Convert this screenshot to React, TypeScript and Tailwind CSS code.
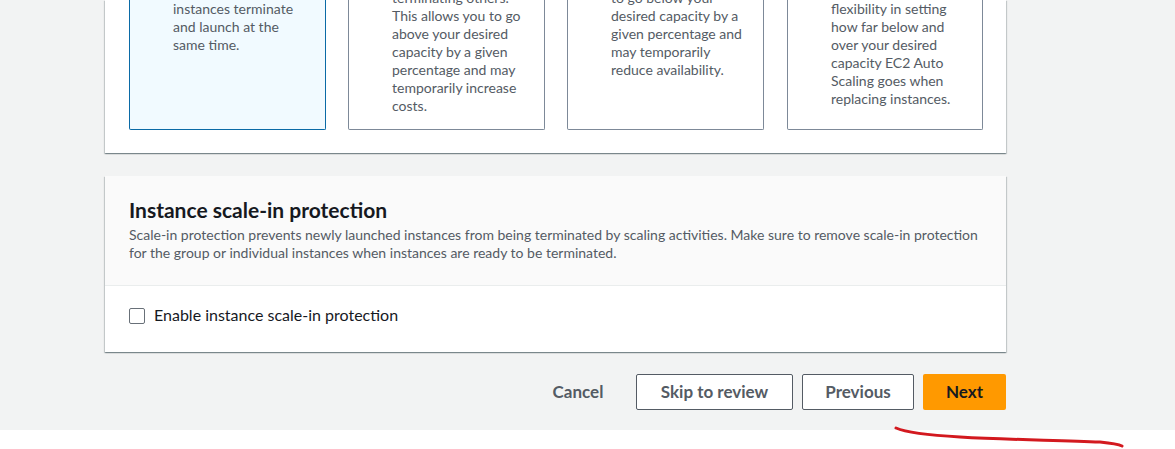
import React from "react";

const tiles: { lines: string[]; offset: string; selected?: boolean; extra?: string }[] = [
  { lines: ["instances terminate", "and launch at the", "same time."], offset: "mt-0", selected: true },
  {
    lines: [
      "terminating others.",
      "This allows you to go",
      "above your desired",
      "capacity by a given",
      "percentage and may",
      "temporarily increase",
      "costs.",
    ],
    offset: "-mt-[11px]",
  },
  {
    lines: [
      "to go below your",
      "desired capacity by a",
      "given percentage and",
      "may temporarily",
      "reduce availability.",
    ],
    offset: "-mt-[11px]",
  },
  {
    lines: [
      "flexibility in setting",
      "how far below and",
      "over your desired",
      "capacity EC2 Auto",
      "Scaling goes when",
      "replacing instances.",
    ],
    offset: "mt-0",
    extra: "ml-[1px]",
  },
];

const cardShadow =
  "shadow-[0_1px_1px_0_rgba(0,28,36,0.3),1px_1px_1px_0_rgba(0,28,36,0.15),-1px_1px_1px_0_rgba(0,28,36,0.15)]";

export default function App() {
  return (
    <div className="relative w-[1175px] h-[449px] bg-white overflow-hidden font-['Lato',sans-serif]">
      <div className="h-[430px] bg-[#f2f3f3] pl-[105px]">
        <div className="w-[901px] flex flex-col">
          {/* Card 1 (top cut off) */}
          <div className={`bg-white ${cardShadow} pl-[24px] pr-[23px] pb-[23px]`}>
            <div className="grid grid-cols-[197px_197px_197px_197px] gap-[22px]">
              {tiles.map((t, i) => (
                <div
                  key={i}
                  className={`h-[130px] overflow-hidden rounded-b-[2px] border border-t-0 ${
                    t.selected ? "border-[#0a6aa6] bg-[#f1faff]" : "border-[#7d8998] bg-white"
                  } ${t.extra ?? ""} pl-[43px] pr-[10px]`}
                >
                  <div className={`${t.offset} text-[14px] leading-[18px] text-[#545b64]`}>
                    {t.lines.map((l, j) => (
                      <div key={j} className="whitespace-nowrap">
                        {l}
                      </div>
                    ))}
                  </div>
                </div>
              ))}
            </div>
          </div>

          {/* Card 2 */}
          <div className={`mt-[23px] bg-white ${cardShadow}`}>
            <div className="bg-[#fafafa] border-b border-[#eaeded] px-[24px] pt-[23px] pb-[23px]">
              <div className="text-[21px] leading-[22px] font-bold text-[#16191f]">
                Instance scale-in protection
              </div>
              <div className="mt-[5px] text-[14px] leading-[18px] text-[#545b64]">
                <div className="whitespace-nowrap">
                  Scale-in protection prevents newly launched instances from being terminated by scaling activities. Make
                  sure to remove scale-in protection
                </div>
                <div>for the group or individual instances when instances are ready to be terminated.</div>
              </div>
            </div>
            <div className="px-[24px] h-[66px] pt-[22px] flex items-start">
              <div className="w-[16px] h-[16px] border border-[#687078] rounded-[2px] bg-white" />
              <span className="ml-[9px] -mt-[3px] text-[16px] leading-[20px] text-[#16191f]">
                Enable instance scale-in protection
              </span>
            </div>
          </div>

          {/* Actions */}
          <div className="mt-[22px] flex justify-end items-center text-[17px] font-bold">
            <button className="h-[36px] w-[96px] mr-[10px] text-[#545b64]">Cancel</button>
            <button className="h-[36px] w-[157px] mr-[9px] border border-[#545b64] rounded-[2px] bg-white text-[#545b64]">
              Skip to review
            </button>
            <button className="h-[36px] w-[112px] mr-[9px] border border-[#545b64] rounded-[2px] bg-white text-[#545b64]">
              Previous
            </button>
            <button className="h-[36px] w-[83px] rounded-[2px] bg-[#ff9900] text-[#16191f]">Next</button>
          </div>
        </div>
      </div>

      <svg className="absolute left-0 top-0 pointer-events-none" width="1175" height="449">
        <path
          d="M896 428 C 905 432, 925 435, 960 437 C 1010 440, 1060 440, 1100 442 C 1110 443, 1118 444, 1122 446"
          stroke="#d3191f"
          strokeWidth="3"
          fill="none"
          strokeLinecap="round"
        />
      </svg>
    </div>
  );
}
